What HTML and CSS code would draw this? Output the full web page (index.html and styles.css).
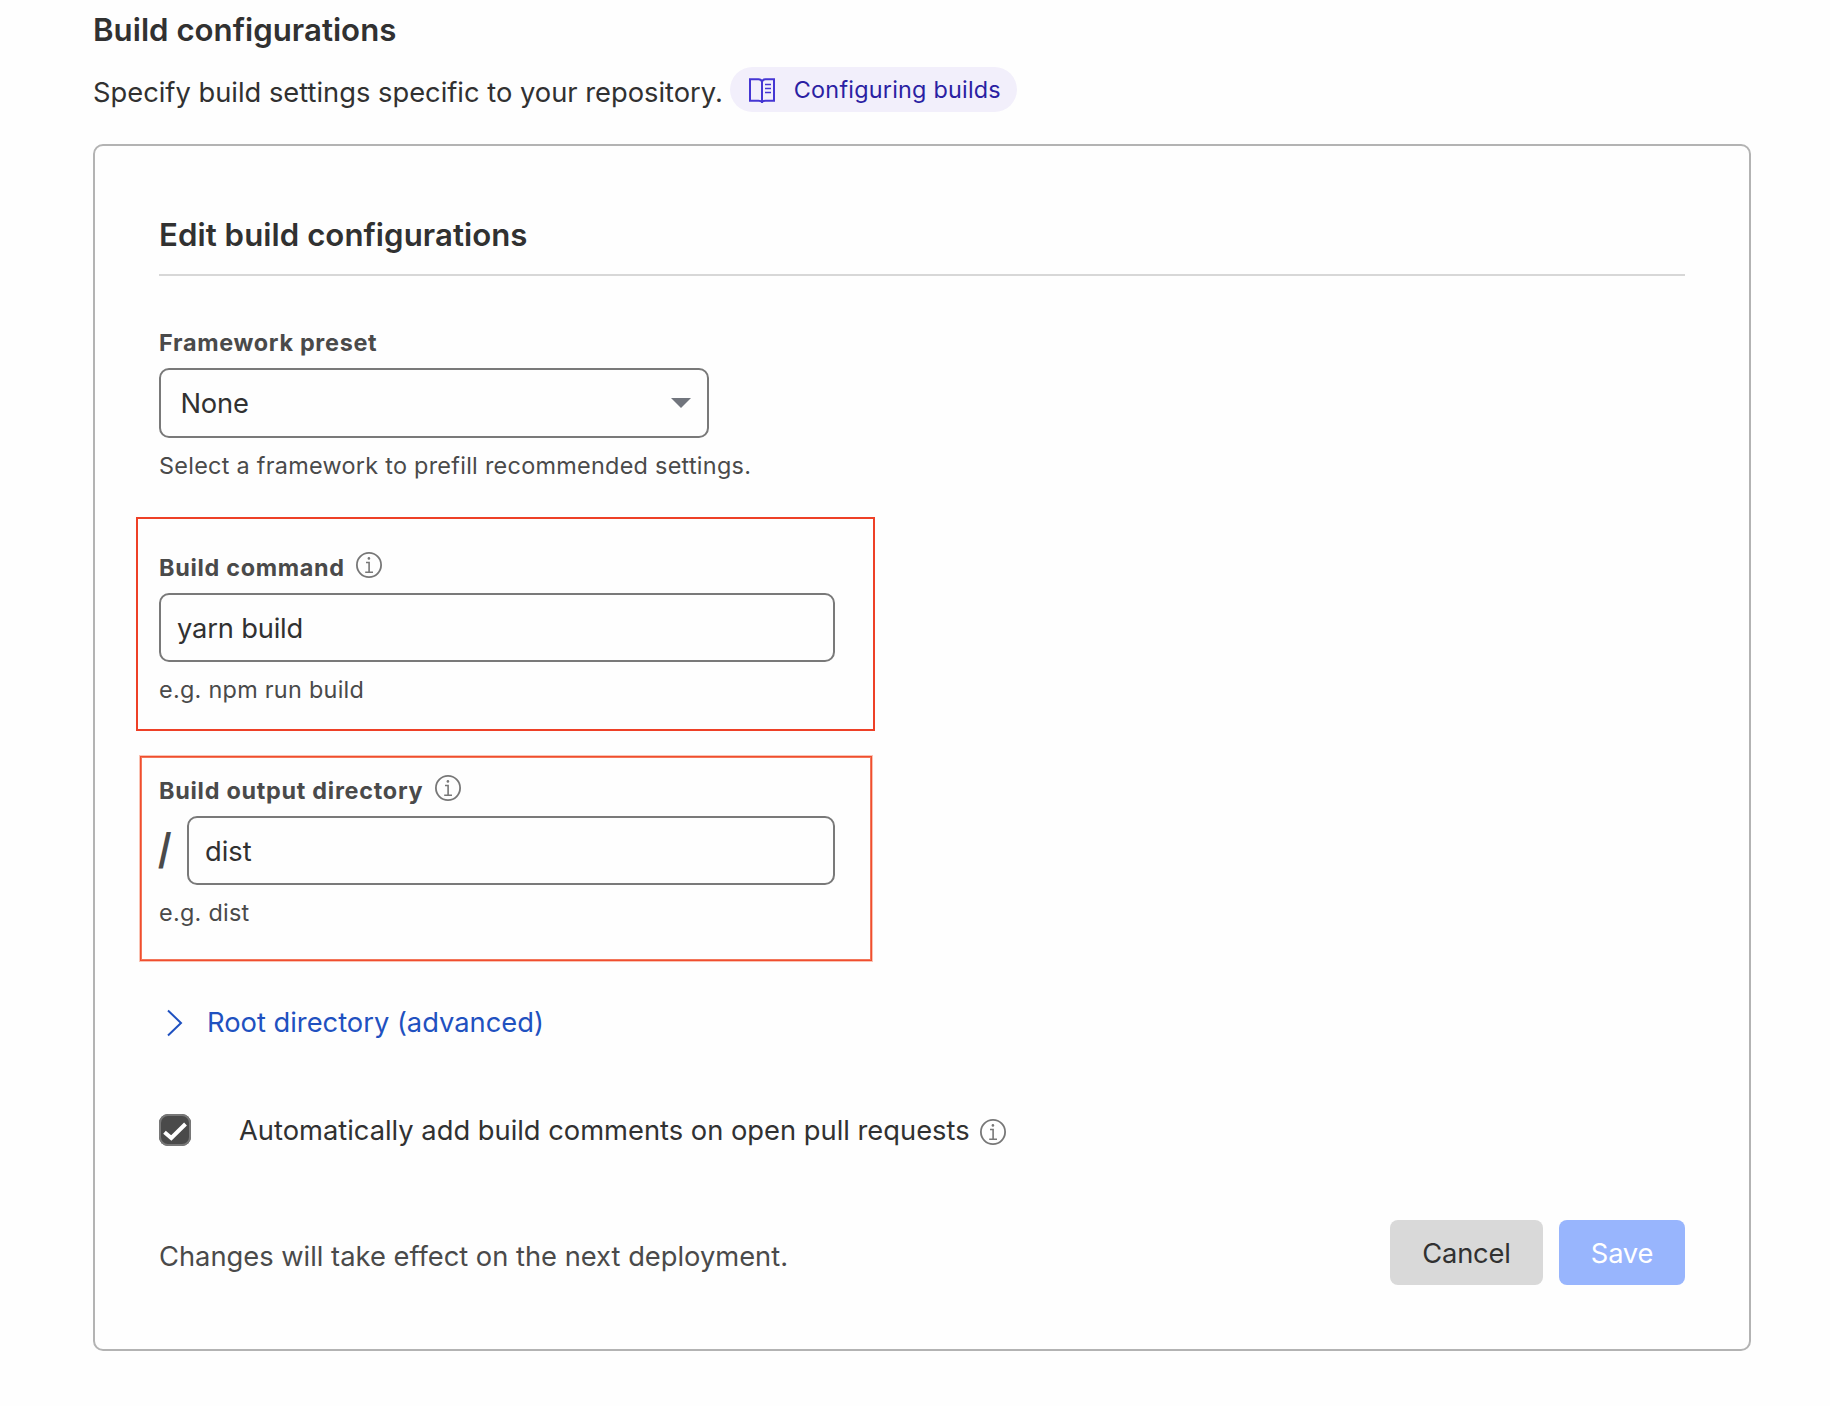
FILE: index.html
```html
<!DOCTYPE html>
<html lang="en">
<head>
  <meta charset="utf-8">
  <title>Build configurations</title>
  <link rel="stylesheet" href="styles.css">
</head>
<body>
  <svg class="sprite" aria-hidden="true">
    <symbol id="info" viewBox="0 0 26 26">
      <circle cx="13" cy="13" r="12.1" fill="none" stroke="currentColor" stroke-width="1.8"/>
      <circle cx="12.9" cy="6.4" r="1.3" fill="currentColor"/>
      <path d="M10 10.5h3.1v9.8M9.2 20.3h7.8" fill="none" stroke="currentColor" stroke-width="1.6"/>
    </symbol>
  </svg>

  <main class="page">
    <h1 class="title">Build configurations</h1>
    <div class="intro">
      <p class="intro-text">Specify build settings specific to your repository.</p>
      <a class="doc-link">
        <svg class="book" viewBox="0 0 26 25" fill="none" stroke="currentColor" stroke-width="2">
          <path d="M1 1.3h8.5c2 0 3 .9 3.5 2.4.5-1.5 1.5-2.4 3.5-2.4H25v21.4h-8.5c-2 0-3 .2-3.5 1.3-.5-1.1-1.5-1.3-3.5-1.3H1zM13 3.5V25"/>
          <path d="M16 6.5h6M16 10.5h6M16 14.5h6" stroke-width="1.5"/>
        </svg>
        <span>Configuring builds</span>
      </a>
    </div>

    <section class="card">
      <h2 class="card-title">Edit build configurations</h2>

      <div class="field field-preset">
        <div class="label">Framework preset</div>
        <div class="select">
          <span>None</span>
          <svg class="caret" viewBox="0 0 20 10"><path d="M0 0h20L10 10z" fill="currentColor"/></svg>
        </div>
        <p class="help">Select a framework to prefill recommended settings.</p>
      </div>

      <div class="field field-command">
        <div class="highlight highlight-command"></div>
        <div class="label"><span>Build command</span><svg class="info"><use href="#info"/></svg></div>
        <input class="input" type="text" value="yarn build">
        <p class="help">e.g. npm run build</p>
      </div>

      <div class="field field-output">
        <div class="highlight highlight-output"></div>
        <div class="label"><span>Build output directory</span><svg class="info"><use href="#info"/></svg></div>
        <div class="prefixed">
          <span class="slash">/</span>
          <input class="input" type="text" value="dist">
        </div>
        <p class="help">e.g. dist</p>
      </div>

      <a class="root-toggle">
        <svg class="chevron" viewBox="0 0 32 40"><path d="M9 8.5 22 21 9 33.5" fill="none" stroke="currentColor" stroke-width="2"/></svg>
        <span class="root-text">Root directory (advanced)</span>
      </a>

      <div class="comments">
        <span class="checkbox">
          <svg viewBox="0 0 32 32"><path d="M5.5 18.2 12.3 24 26.5 10" fill="none" stroke="#fff" stroke-width="4"/></svg>
        </span>
        <span class="comments-text">Automatically add build comments on open pull requests</span>
        <svg class="info"><use href="#info"/></svg>
      </div>

      <div class="footer">
        <p class="note">Changes will take effect on the next deployment.</p>
        <div class="actions">
          <button class="btn btn-cancel">Cancel</button>
          <button class="btn btn-save">Save</button>
        </div>
      </div>
    </section>
  </main>
</body>
</html>
```
FILE: styles.css
```css
* {
  box-sizing: border-box;
  margin: 0;
}

body {
  background: #fefefe;
  color: #313131;
  font: 400 27.3px/40px Inter, sans-serif;
}

.sprite {
  display: none;
}

.page {
  width: 1751px;
  padding: 10px 0 0 93px;
}

.title,
.card-title {
  font-size: 31.2px;
  font-weight: 600;
  line-height: 40px;
}

.title {
  letter-spacing: 0.02px;
}

.card-title {
  letter-spacing: 0.05px;
}

.intro {
  display: flex;
  align-items: flex-start;
  gap: 7px;
  margin-top: 17px;
}

.intro-text {
  margin-top: 6px;
  white-space: nowrap;
}

.doc-link {
  display: flex;
  align-items: center;
  gap: 19px;
  width: 287px;
  height: 45px;
  padding-left: 19px;
  border-radius: 23px;
  background: #f2effb;
  color: #2b1fa3;
  font-size: 23.4px;
  line-height: 45px;
  letter-spacing: 0.22px;
  white-space: nowrap;
}

.book {
  width: 26px;
  height: 25px;
  margin-top: 1px;
  color: #4536d3;
}

.card {
  height: 1207px;
  margin-top: 31px;
  padding: 64px;
  border: 2px solid #b3b3b3;
  border-radius: 10px;
}

.card-title {
  padding: 5px 0 19px;
  border-bottom: 2px solid #d7d7d7;
  box-sizing: content-box;
}

.field {
  position: relative;
}

.field-preset {
  margin-top: 51px;
}

.field-command {
  margin-top: 70px;
}

.field-output {
  margin-top: 69px;
}

.label {
  display: flex;
  gap: 11px;
  height: 32px;
  color: #4a4a4a;
  font-size: 23.4px;
  font-weight: 700;
  line-height: 32px;
  letter-spacing: 0.7px;
}

.field-output .label {
  gap: 12px;
  letter-spacing: 0.73px;
}

.info {
  flex: none;
  width: 26px;
  height: 26px;
  color: #777;
}

.select {
  display: flex;
  align-items: center;
  justify-content: space-between;
  width: 550px;
  height: 70px;
  margin-top: 9px;
  padding: 0 16px 0 19.5px;
  border: 2px solid #797979;
  border-radius: 10px;
  letter-spacing: -0.2px;
}

.select span {
  padding-top: 2px;
}

.caret {
  width: 20px;
  height: 10px;
  color: #71757d;
}

.input {
  display: block;
  width: 676px;
  height: 69px;
  margin-top: 9px;
  padding: 2px 16px 0;
  border: 2px solid #797979;
  border-radius: 10px;
  outline: none;
  background: transparent;
  color: #313131;
  font: inherit;
  letter-spacing: -0.18px;
}

.help {
  margin-top: 12px;
  color: #4a4a4a;
  font-size: 23.4px;
  line-height: 32px;
  letter-spacing: 0.28px;
}

.prefixed {
  display: flex;
  width: 676px;
  margin-top: 9px;
}

.prefixed .input {
  flex: 1;
  min-width: 0;
  margin-top: 0;
  letter-spacing: 0;
}

.slash {
  flex: none;
  width: 29px;
  margin-left: -1px;
  color: #4a4a4a;
  font-size: 42px;
  font-weight: 700;
  line-height: 66px;
  transform: scaleX(0.82);
  transform-origin: 0 50%;
}

/* Red call-out frames drawn over the two fields to fill in */
.highlight {
  position: absolute;
  pointer-events: none;
}

.highlight-command {
  top: -35px;
  left: -23px;
  width: 739px;
  height: 214px;
  border: 2px solid #ee4027;
}

.highlight-output {
  top: -19px;
  left: -19px;
  width: 732px;
  height: 205px;
  border: 1px solid #f04e2e;
  box-shadow: 0 0 0 1px #fac3b4, inset 0 0 0 1px #f3765a;
}

.root-toggle {
  display: flex;
  gap: 16px;
  margin-top: 73px;
  color: #1f51c0;
}

.chevron {
  width: 32px;
  height: 40px;
}

.root-text {
  padding-top: 1px;
}

.comments {
  display: flex;
  align-items: center;
  height: 40px;
  margin-top: 67px;
}

.checkbox {
  width: 32px;
  height: 32px;
  border-radius: 9px;
  background: #4a4a4a;
  box-shadow: inset 0 0 0 2px #777;
}

.checkbox svg {
  display: block;
}

.comments-text {
  margin: 0 10px 0 48px;
  padding-top: 2px;
}

.comments .info {
  margin-top: 4px;
}

.footer {
  display: flex;
  justify-content: space-between;
  margin-top: 70px;
}

.note {
  margin-top: 17px;
  color: #4a4a4a;
}

.actions {
  display: flex;
  gap: 16px;
}

.btn {
  width: 126px;
  height: 65px;
  padding: 3px 0 0;
  border: 0;
  border-radius: 8px;
  font: inherit;
  letter-spacing: -0.2px;
}

.btn-cancel {
  width: 153px;
  background: #d9d9d9;
  color: #313131;
}

.btn-save {
  background: #98b5fd;
  color: #fff;
}
```
